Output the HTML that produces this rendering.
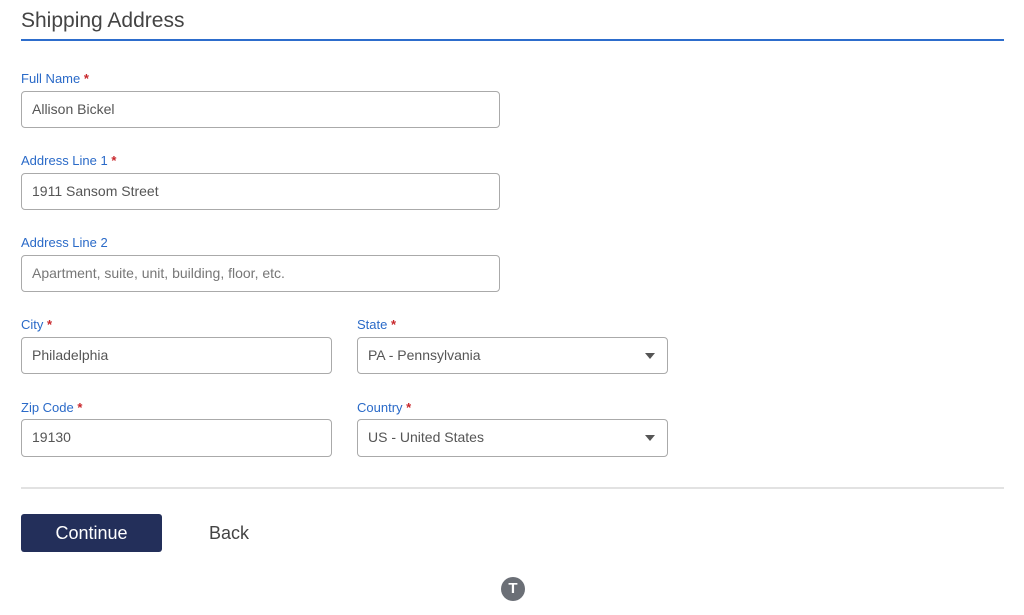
<!DOCTYPE html>
<html><head><style>
body{margin:0;width:1024px;height:615px;background:#fff;font-family:"Liberation Sans",sans-serif;position:relative;overflow:hidden}
.a{position:absolute}
h1{position:absolute;left:21px;top:9px;margin:0;font-size:21px;font-weight:normal;color:#444}
.lbl{position:absolute;font-size:13px;color:#2a6ac8}
.lbl b{color:#c8262b;font-weight:bold}
.in{position:absolute;height:35px;border:1px solid #aaa;border-radius:4px;box-sizing:border-box;font-size:14px;color:#555;padding:0 10px;line-height:34px}
.ph{color:#777}
.car{position:absolute;right:12px;top:15px;width:0;height:0;border-left:5px solid transparent;border-right:5px solid transparent;border-top:6px solid #555}
</style></head><body>
<h1>Shipping Address</h1>
<div class="a" style="left:21px;top:39px;width:983px;height:2px;background:#2d6dcc"></div>
<div class="lbl" style="left:21px;top:71px">Full Name <b>*</b></div>
<div class="in" style="left:21px;top:91px;width:479px;height:37px">Allison Bickel</div>
<div class="lbl" style="left:21px;top:153px">Address Line 1 <b>*</b></div>
<div class="in" style="left:21px;top:173px;width:479px;height:37px">1911 Sansom Street</div>
<div class="lbl" style="left:21px;top:235px">Address Line 2</div>
<div class="in ph" style="left:21px;top:255px;width:479px;height:37px">Apartment, suite, unit, building, floor, etc.</div>
<div class="lbl" style="left:21px;top:317px">City <b>*</b></div>
<div class="in" style="left:21px;top:337px;width:311px;height:37px">Philadelphia</div>
<div class="lbl" style="left:357px;top:317px">State <b>*</b></div>
<div class="in" style="left:357px;top:337px;width:311px;height:37px">PA - Pennsylvania<div class="car"></div></div>
<div class="lbl" style="left:21px;top:400px">Zip Code <b>*</b></div>
<div class="in" style="left:21px;top:419px;width:311px;height:38px">19130</div>
<div class="lbl" style="left:357px;top:400px">Country <b>*</b></div>
<div class="in" style="left:357px;top:419px;width:311px;height:38px">US - United States<div class="car"></div></div>
<div class="a" style="left:21px;top:487px;width:983px;height:2px;background:#e2e2e2"></div>
<div class="a" style="left:21px;top:514px;width:141px;height:38px;background:#232f5a;border-radius:3px;color:#fff;font-size:18px;text-align:center;line-height:38px">Continue</div>
<div class="a" style="left:209px;top:523px;font-size:18px;color:#444">Back</div>
<div class="a" style="left:501px;top:577px;width:24px;height:24px;border-radius:50%;background:#6b6f76;color:#fff;font-weight:bold;font-size:15px;text-align:center;line-height:24px">T</div>
</body></html>
